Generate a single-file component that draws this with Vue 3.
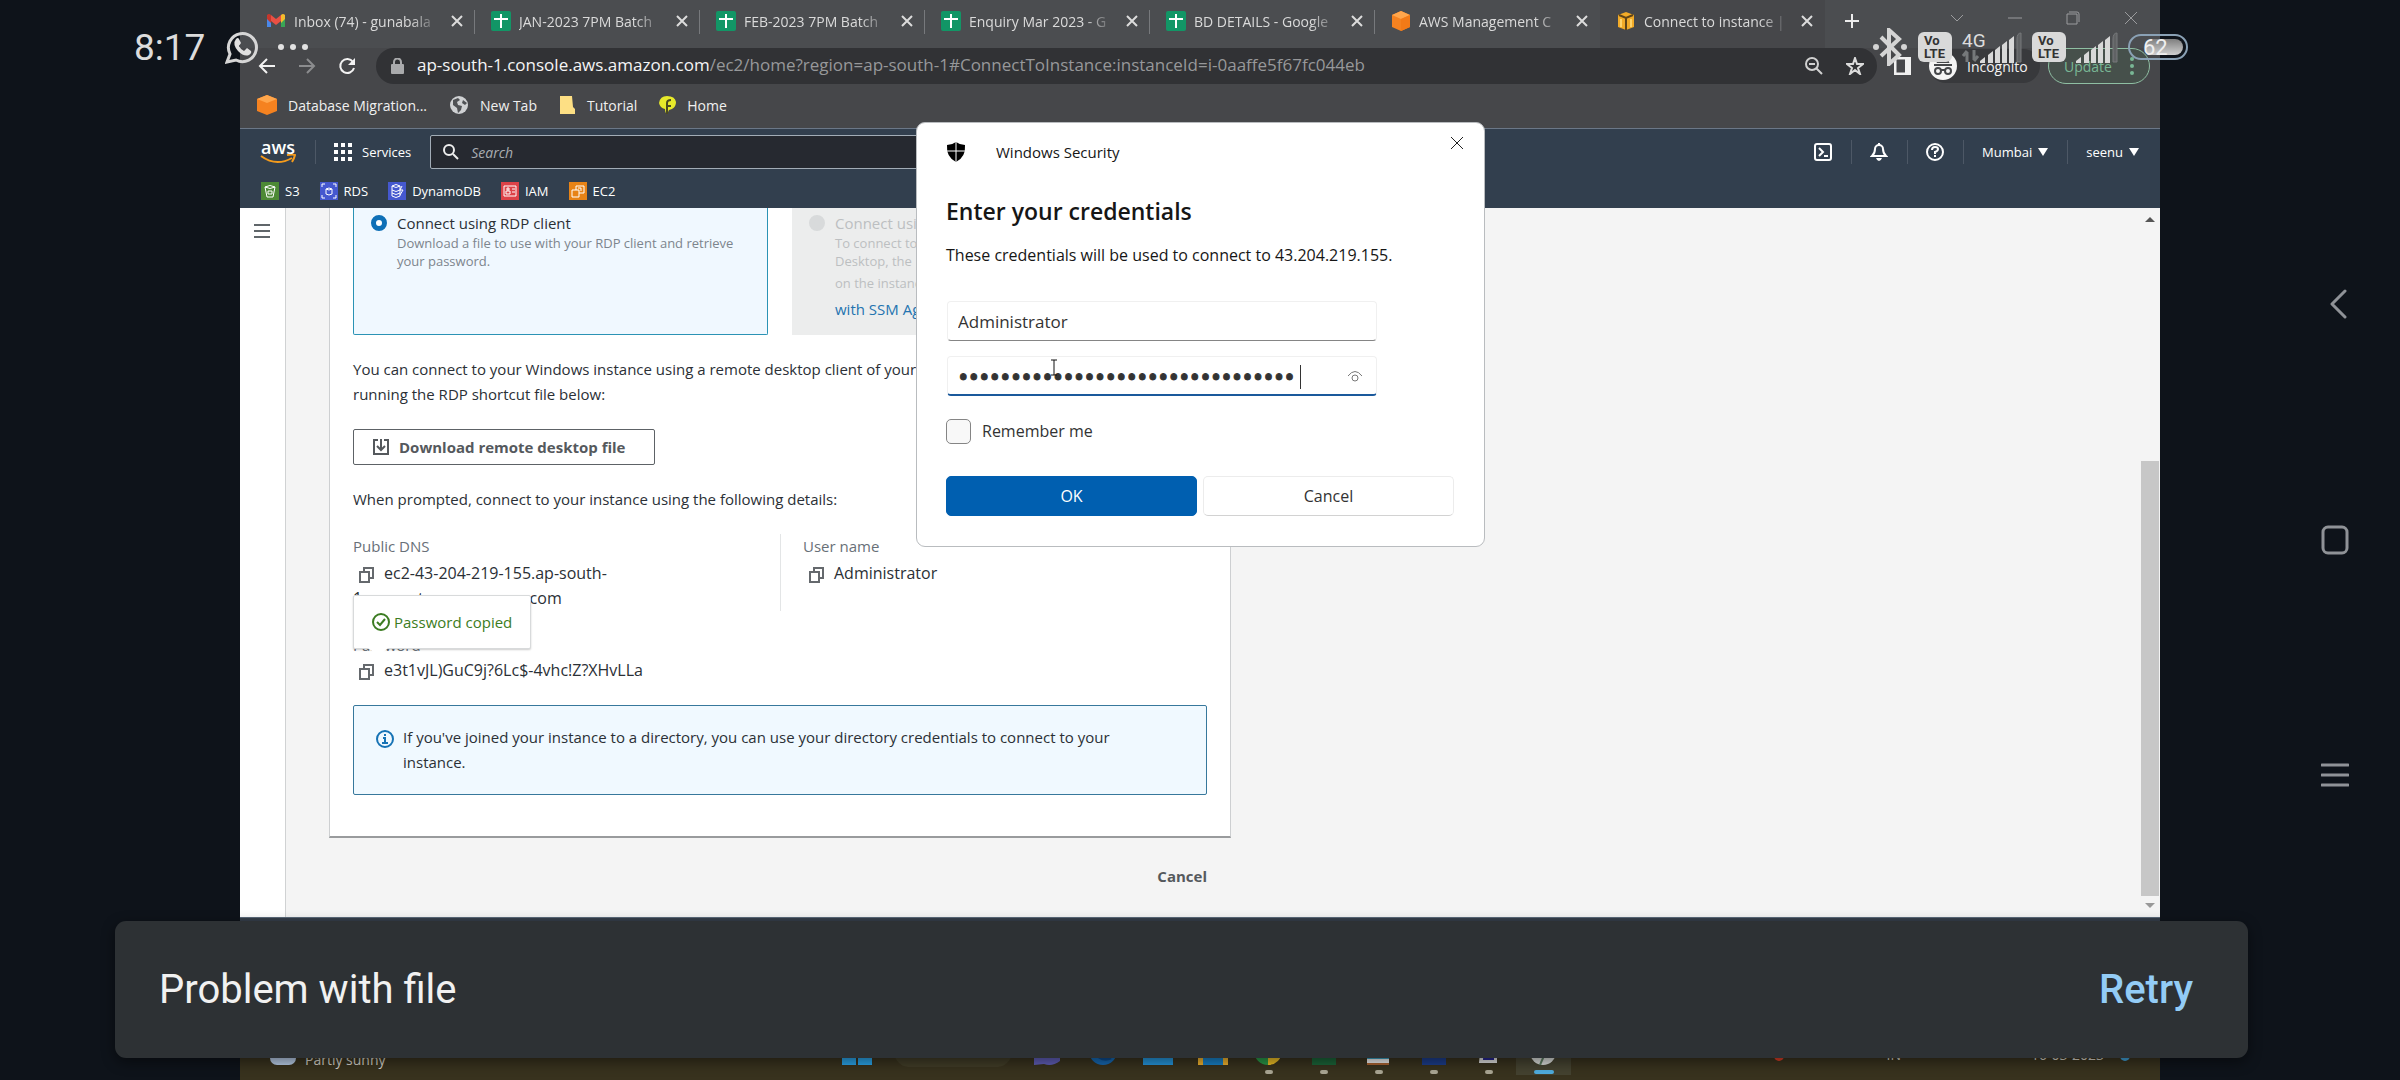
<script setup>
import { ref } from 'vue'

const tabs = [
  { title: 'Inbox (74) - gunabala', icon: 'gmail', line: true },
  { title: 'JAN-2023 7PM Batch', icon: 'sheet', line: true },
  { title: 'FEB-2023 7PM Batch', icon: 'sheet', line: true },
  { title: 'Enquiry Mar 2023 - G', icon: 'sheet', line: true },
  { title: 'BD DETAILS - Google', icon: 'sheet', line: true },
  { title: 'AWS Management C', icon: 'cube' },
  { title: 'Connect to instance |', icon: 'box', active: true },
]

const bookmarks = [
  { label: 'Database Migration...', icon: 'cube' },
  { label: 'New Tab', icon: 'globe' },
  { label: 'Tutorial', icon: 'folder' },
  { label: 'Home', icon: 'leaf' },
]

const favourites = [
  { label: 'S3', color: '#4d8a35' },
  { label: 'RDS', color: '#4558cf' },
  { label: 'DynamoDB', color: '#4558cf' },
  { label: 'IAM', color: '#dd4248' },
  { label: 'EC2', color: '#e78316' },
]

const taskApps = ['start', 'search', 'chat', 'edge', 'mail', 'files', 'chrome', 'excel', 'notes', 'word', 'putty', 'rdp']

const user = ref('Administrator')
const password = ref('e3t1vJL)GuC9j?6Lc$-4vhc!Z?XHvLLa')
const remember = ref(false)
</script>

<template>
  <div class="phone">
    <div class="edge"></div>

    <div class="screen">
      <div class="tabs">
        <div v-for="t in tabs" :key="t.title" class="tab" :class="{ active: t.active, line: t.line }">
          <svg v-if="t.icon === 'gmail'" class="fav" viewBox="0 0 20 20">
            <path d="M1 5v11h4V9z" fill="#4a88e8" /><path d="M19 5v11h-4V9z" fill="#39a556" />
            <path d="M1 4q2-2 4 0v8L1 8z" fill="#c5372c" /><path d="M5 4l5 4 5-4v6l-5 4-5-4z" fill="#ea5044" />
            <path d="M15 4q2-2 4 0v4l-4 4z" fill="#f5bb2c" />
          </svg>
          <svg v-else-if="t.icon === 'sheet'" class="fav" viewBox="0 0 20 20">
            <rect width="20" height="20" rx="2" fill="#129666" />
            <path d="M10 3v14M3 8h14" stroke="#fff" stroke-width="2" />
          </svg>
          <svg v-else-if="t.icon === 'cube'" class="fav" viewBox="0 0 20 20">
            <path d="M10 0l9 4v12l-9 4-9-4V4z" fill="#f58220" /><path d="M10 0l9 4-9 4-9-4z" fill="#ffa64c" />
            <path d="M10 8l9-4v12l-9 4z" fill="#f37a17" />
          </svg>
          <svg v-else class="fav" viewBox="0 0 20 20">
            <path d="M10 1l8 3v12l-8 3-8-3V4z" fill="#f2ab28" /><path d="M3 4l7 3 7-3M10 7v12" stroke="#604417" stroke-width="2" fill="none" />
            <path d="M5 8v8M15 8v8" stroke="#ffd36a" stroke-width="2" />
          </svg>
          <span class="tab-title">{{ t.title }}</span>
          <button class="tab-x" aria-label="Close tab">
            <svg width="12" height="12" viewBox="0 0 12 12"><path d="M1 1l10 10M11 1L1 11" stroke="#dcdcdc" stroke-width="2" /></svg>
          </button>
        </div>
        <button class="new-tab" aria-label="New tab">
          <svg width="16" height="16" viewBox="0 0 16 16"><path d="M8 1v14M1 8h14" stroke="#ececec" stroke-width="2" /></svg>
        </button>
        <div class="win-controls">
          <svg width="14" height="14" viewBox="0 0 14 14"><path d="M1 4l6 6 6-6" /></svg>
          <svg width="14" height="14" viewBox="0 0 14 14"><path d="M0 7h14" /></svg>
          <svg width="14" height="14" viewBox="0 0 14 14"><path d="M1 3h10v10H1zM3 1h8q2 0 2 2v8" /></svg>
          <svg width="14" height="14" viewBox="0 0 14 14"><path d="M1 1l12 12M13 1L1 13" /></svg>
        </div>
      </div>

      <div class="toolbar">
        <button aria-label="Back"><svg width="18" height="18" viewBox="0 0 18 18"><path d="M17 9H2M9 2L2 9l7 7" stroke="#f2f2f2" stroke-width="2" fill="none" /></svg></button>
        <button aria-label="Forward"><svg width="18" height="18" viewBox="0 0 18 18"><path d="M1 9h15M9 2l7 7-7 7" stroke="#8b8c8e" stroke-width="2" fill="none" /></svg></button>
        <button aria-label="Reload"><svg width="18" height="18" viewBox="0 0 18 18"><path d="M15 5a7 7 0 1 0 1 6" stroke="#f2f2f2" stroke-width="2" fill="none" /><path d="M17 1v7h-7z" fill="#f2f2f2" /></svg></button>
        <div class="address">
          <svg width="13" height="16" viewBox="0 0 13 16"><rect y="6" width="13" height="10" rx="1" fill="#a9aaac" /><path d="M3 7V4a3 3 0 0 1 7 0v3" stroke="#a9aaac" stroke-width="2" fill="none" /></svg>
          <span class="url"><b>ap-south-1.console.aws.amazon.com</b>/ec2/home?region=ap-south-1#ConnectToInstance:instanceId=i-0aaffe5f67fc044eb</span>
          <svg width="18" height="18" viewBox="0 0 18 18"><g stroke="#d0d0d0" stroke-width="2" fill="none"><circle cx="7" cy="7" r="6" /><path d="M11 11l6 6M4 7h6" /></g></svg>
          <svg width="18" height="18" viewBox="0 0 18 18"><path d="M9 1l2 6h6l-5 4 2 6-5-4-5 4 2-6-5-4h6z" stroke="#dcdcdc" stroke-width="2" fill="none" /></svg>
        </div>
        <svg class="panel-ico" width="17" height="18" viewBox="0 0 17 18"><path d="M1 1h15v16H1z" stroke="#f0f0f0" stroke-width="3" fill="none" /><path d="M11 1h5v16h-5z" fill="#f0f0f0" /></svg>
        <div class="incognito">
          <svg width="28" height="28" viewBox="0 0 28 28"><circle cx="14" cy="14" r="14" fill="#f4f4f4" /><path d="M5 13h18M9 10l2-5h6l2 5z" stroke="#45474a" stroke-width="2" fill="#45474a" /><g stroke="#45474a" stroke-width="2" fill="none"><circle cx="9" cy="19" r="3" /><circle cx="19" cy="19" r="3" /><path d="M12 18h4" /></g></svg>
          Incognito
        </div>
        <button class="update">Update <svg width="4" height="18" viewBox="0 0 4 18"><g fill="#79b795"><circle cx="2" cy="2" r="2" /><circle cx="2" cy="9" r="2" /><circle cx="2" cy="16" r="2" /></g></svg></button>
      </div>

      <div class="bookmarks">
        <a v-for="b in bookmarks" :key="b.label" href="#">
          <svg v-if="b.icon === 'cube'" width="20" height="20" viewBox="0 0 20 20"><path d="M10 0l10 4v12l-10 4-10-4V4z" fill="#f58220" /><path d="M10 0l10 4-10 4L0 4z" fill="#ffa64c" /></svg>
          <svg v-else-if="b.icon === 'globe'" width="20" height="20" viewBox="0 0 20 20"><circle cx="10" cy="10" r="9" fill="#cfd1d3" /><path d="M4 5l5-2 2 2-3 2 1 3 4 1-1 4-3 3-1-5-4-3zM14 5l4 3-2 2-3-2z" fill="#505255" /></svg>
          <svg v-else-if="b.icon === 'folder'" width="17" height="18" viewBox="0 0 17 18"><path d="M1 0h12l1 11 2 2v5H1z" fill="#fddf84" /></svg>
          <svg v-else width="17" height="18" viewBox="0 0 17 18"><path d="M0 7q1-7 8-7 8 0 9 6 0 5-4 7l-3 1-2 4q-2-1-2-5Q1 12 0 7z" fill="#e7e92a" /><path d="M8 18V7q0-3 4-3M8 10h4" stroke="#4a4a20" stroke-width="2" fill="none" /></svg>
          {{ b.label }}
        </a>
      </div>

      <header class="aws">
        <div class="aws-top">
          <a class="logo" href="#" aria-label="AWS home">
            <span>aws</span>
            <svg width="36" height="11" viewBox="0 0 36 11"><path d="M1 2q15 11 31 2" stroke="#f49b1c" stroke-width="2" fill="none" /><path d="M27 1q6-1 8 0-1 4-3 7" stroke="#f49b1c" stroke-width="2" fill="none" /></svg>
          </a>
          <button class="services">
            <svg width="18" height="18" viewBox="0 0 18 18" fill="#fff"><g v-for="y in [0, 7, 14]" :key="y"><rect v-for="x in [0, 7, 14]" :key="x" :x="x" :y="y" width="4" height="4" /></g></svg>
            Services
          </button>
          <label class="search-box">
            <svg width="16" height="16" viewBox="0 0 16 16"><circle cx="6" cy="6" r="5" stroke="#eee" stroke-width="2" fill="none" /><path d="M10 10l5 5" stroke="#eee" stroke-width="2" /></svg>
            <input type="text" placeholder="Search" aria-label="Search" />
          </label>
          <nav class="aws-tools">
            <button aria-label="CloudShell"><svg width="18" height="18" viewBox="0 0 18 18"><rect x="1" y="1" width="16" height="16" rx="2" stroke="#fff" stroke-width="2" fill="none" /><path d="M5 5l4 4-4 4M10 13h4" stroke="#fff" stroke-width="2" fill="none" /></svg></button>
            <button aria-label="Notifications"><svg width="18" height="18" viewBox="0 0 18 18"><path d="M2 13q3-3 3-7a4 4 0 0 1 8 0q0 4 3 7z" stroke="#fff" stroke-width="2" fill="none" /><path d="M6 15h6q-1 3-3 3t-3-3zM8 0h2v3H8z" fill="#fff" /></svg></button>
            <button aria-label="Help"><svg width="18" height="18" viewBox="0 0 18 18"><circle cx="9" cy="9" r="8" stroke="#fff" stroke-width="2" fill="none" /><path d="M6 7q0-3 3-3t3 2q0 2-3 3v2M9 12v2" stroke="#fff" stroke-width="2" fill="none" /></svg></button>
            <button>Mumbai <i class="caret-down"></i></button>
            <button>seenu <i class="caret-down"></i></button>
          </nav>
        </div>
        <nav class="aws-favs">
          <a v-for="f in favourites" :key="f.label" href="#">
            <svg width="18" height="18" viewBox="0 0 18 18">
              <rect width="18" height="18" :fill="f.color" />
              <g stroke="#fff" fill="none">
                <path v-if="f.label === 'S3'" d="M4 5q5-3 10 0l-2 10H6zM4 5q5 3 10 0M7 9h4v3H7z" />
                <path v-else-if="f.label === 'RDS'" d="M6 7q3-2 6 0v5q-3 2-6 0zM6 7q3 2 6 0M2 5V2h3M13 2h3v3M2 13v3h3M13 16h3v-3" />
                <path v-else-if="f.label === 'DynamoDB'" d="M4 4q4-3 8 0v10q-4 3-8 0zM4 4q4 3 8 0M4 8q4 3 8 0M4 11q4 3 8 0M14 4l-2 4h3l-3 5" />
                <path v-else-if="f.label === 'IAM'" d="M3 4h12v10H3zM5 12h4V9H5zM6 6h2v2H6zM11 7h3M11 10h3" />
                <path v-else d="M3 8h7v7H3zM7 8V4h8v7h-5M9 6h3v3" />
              </g>
            </svg>
            {{ f.label }}
          </a>
        </nav>
      </header>

      <div class="body">
        <aside class="side">
          <button aria-label="Open navigation"><svg width="16" height="14" viewBox="0 0 16 14"><path d="M0 1h16M0 7h16M0 13h16" stroke="#60666a" stroke-width="2" /></svg></button>
        </aside>

        <main class="main">
          <section class="panel">
            <div class="cards">
              <label class="card on">
                <input type="radio" name="method" checked />
                <span class="card-text">
                  <span class="card-title">Connect using RDP client</span>
                  <span class="card-desc">Download a file to use with your RDP client and retrieve<br />your password.</span>
                </span>
              </label>
              <label class="card off">
                <input type="radio" name="method" disabled />
                <span class="card-text">
                  <span class="card-title">Connect using</span>
                  <span class="card-desc">To connect to<br />Desktop, the</span>
                  <span class="card-note">on the instance</span>
                  <a href="#">with SSM Agent</a>
                </span>
              </label>
            </div>

            <p>You can connect to your Windows instance using a remote desktop client of your<br />running the RDP shortcut file below:</p>
            <button class="download">
              <svg width="16" height="16" viewBox="0 0 16 16"><path d="M5 1H1v14h14V1h-4M8 0v11M4 7l4 4 4-4" stroke="#55595d" stroke-width="2" fill="none" /></svg>
              Download remote desktop file
            </button>
            <p>When prompted, connect to your instance using the following details:</p>

            <div class="details">
              <div>
                <div class="label">Public DNS</div>
                <div class="value"><svg class="copy" width="15" height="16" viewBox="0 0 15 16"><path d="M1 5h9v10H1zM5 5V1h9v10h-4" /></svg>ec2-43-204-219-155.ap-south-<br />1.compute.amazonaws.com</div>
              </div>
              <div class="second">
                <div class="label">User name</div>
                <div class="value"><svg class="copy" width="15" height="16" viewBox="0 0 15 16"><path d="M1 5h9v10H1zM5 5V1h9v10h-4" /></svg>Administrator</div>
              </div>
            </div>

            <div class="pass">
              <div class="label">Password</div>
              <div class="value"><svg class="copy" width="15" height="16" viewBox="0 0 15 16"><path d="M1 5h9v10H1zM5 5V1h9v10h-4" /></svg>e3t1vJL)GuC9j?6Lc$-4vhc!Z?XHvLLa</div>
              <div class="tip" role="status">
                <svg width="18" height="18" viewBox="0 0 18 18"><circle cx="9" cy="9" r="8" /><path d="M5 9l3 3 5-6" /></svg>
                Password copied
              </div>
            </div>

            <div class="alert">
              <svg width="18" height="18" viewBox="0 0 18 18"><circle cx="9" cy="9" r="8" stroke="#1673b5" stroke-width="2" fill="none" /><path d="M9 4v2M7 8h2v5M6 13h6" stroke="#1673b5" stroke-width="2" fill="none" /></svg>
              <span>If you've joined your instance to a directory, you can use your directory credentials to connect to your<br />instance.</span>
            </div>
          </section>
          <div class="foot"><button>Cancel</button></div>
        </main>

        <div class="scroll"><i class="up"></i><i class="thumb"></i><i class="down"></i></div>
      </div>

      <div class="aws-footer"></div>
      <div class="taskbar">
        <div class="weather">
          <svg width="26" height="26" viewBox="0 0 26 26"><circle cx="16" cy="9" r="8" fill="#f5b93a" /><rect y="10" width="26" height="16" rx="7" fill="#b7cbe6" /></svg>
          <span>Partly sunny</span>
        </div>
        <div class="apps">
          <div v-for="(a, i) in taskApps" :key="a" class="app" :class="[a, { run: i > 5 }]">
            <svg v-if="a === 'start'" width="30" height="30" viewBox="0 0 30 30"><path d="M0 0h14v14H0zM16 0h14v14H16zM0 16h14v14H0zM16 16h14v14H16z" fill="#2aa2e6" /></svg>
            <svg v-else-if="a === 'chat'" width="28" height="28" viewBox="0 0 28 28"><path d="M0 4h26v20q-8 6-16 3l-10 1z" fill="#5f5db5" /></svg>
            <svg v-else-if="a === 'edge'" width="28" height="28" viewBox="0 0 28 28"><circle cx="14" cy="14" r="14" fill="#1667b0" /><path d="M10 20q6 4 12 1" stroke="#0c4b8c" stroke-width="3" fill="none" /></svg>
            <svg v-else-if="a === 'mail'" width="30" height="28" viewBox="0 0 30 28"><path d="M0 4h30v24H0z" fill="#2493d8" /></svg>
            <svg v-else-if="a === 'files'" width="30" height="28" viewBox="0 0 30 28"><path d="M0 4h30v24H0z" fill="#edb02d" /><path d="M5 18h20v10H5z" fill="#187fc4" /></svg>
            <svg v-else-if="a === 'chrome'" width="28" height="28" viewBox="0 0 28 28"><path d="M14 0v28A14 14 0 0 1 14 0z" fill="#299747" /><path d="M14 0a14 14 0 0 1 0 28z" fill="#eabc25" /></svg>
            <svg v-else-if="a === 'excel'" width="26" height="26" viewBox="0 0 26 26"><path d="M2 2h24v24H2z" fill="#1b6338" /></svg>
            <svg v-else-if="a === 'notes'" width="24" height="28" viewBox="0 0 24 28"><path d="M1 2h22v20H1z" fill="#3a9fc0" /><path d="M1 22h22v4H1z" fill="#eee" /><path d="M1 26h22v2H1z" fill="#a86230" /></svg>
            <svg v-else-if="a === 'word'" width="26" height="26" viewBox="0 0 26 26"><path d="M2 2h24v24H2z" fill="#1c3d8a" /></svg>
            <svg v-else-if="a === 'putty'" width="22" height="28" viewBox="0 0 22 28"><path d="M4 4h16v22H2z" fill="#ddd" /><path d="M7 8h10v15H6z" fill="#25258f" /></svg>
            <svg v-else-if="a === 'rdp'" width="26" height="28" viewBox="0 0 26 28"><circle cx="13" cy="15" r="13" fill="#d9dcd9" /><path d="M10 28l6-14" stroke="#5e7d62" stroke-width="2" /></svg>
          </div>
        </div>
        <div class="tray">
          <span class="red"></span>
          <span>ENG<br />IN</span>
          <span>20:17<br />16-03-2023</span>
          <span class="blue"></span>
        </div>
      </div>

      <div class="dialog" role="dialog" aria-label="Windows Security">
        <div class="dlg-head">
          <svg width="20" height="20" viewBox="0 0 20 20"><path d="M10 0q4 3 9 3 1 12-9 17Q0 15 1 3q5 0 9-3z" fill="#000" /><path d="M10 0v20M1 9h18" stroke="#fff" /></svg>
          <span>Windows Security</span>
          <button aria-label="Close"><svg width="14" height="14" viewBox="0 0 14 14"><path d="M1 1l12 12M13 1L1 13" stroke="#222" /></svg></button>
        </div>
        <h1>Enter your credentials</h1>
        <p>These credentials will be used to connect to 43.204.219.155.</p>
        <input v-model="user" class="field" type="text" aria-label="User name" />
        <div class="pw">
          <input v-model="password" class="field" type="password" aria-label="Password" />
          <i class="text-caret"></i>
          <svg class="eye" width="16" height="12" viewBox="0 0 16 12"><path d="M1 6q7-9 14 0" stroke="#777" fill="none" /><circle cx="8" cy="8" r="3" stroke="#777" fill="none" /></svg>
          <svg class="ibeam" width="8" height="17" viewBox="0 0 8 17"><path d="M1 1h6M1 16h6M4 1v15" stroke="#111" fill="none" /></svg>
        </div>
        <label class="remember"><input v-model="remember" type="checkbox" />Remember me</label>
        <div class="dlg-actions"><button class="ok">OK</button><button>Cancel</button></div>
      </div>
    </div>

    <nav class="keys">
      <button aria-label="Back"><svg width="28" height="30" viewBox="0 0 28 30"><path d="M24 2L11 15l13 13" /></svg></button>
      <button aria-label="Home"><svg width="28" height="30" viewBox="0 0 28 30"><rect x="2" y="2" width="24" height="26" rx="5" /></svg></button>
      <button aria-label="Recent apps"><svg width="28" height="30" viewBox="0 0 28 30"><path d="M1 4h26M1 14h26M1 24h26" /></svg></button>
    </nav>

    <div class="status">
      <span class="clock">8:17</span>
      <svg width="34" height="34" viewBox="0 0 34 34"><path d="M2 32l3-8a14 14 0 1 1 6 6z" stroke="#d6d6d6" stroke-width="3" fill="none" /><path d="M11 9q2-2 3 0l2 4-2 3q2 4 5 5l3-3 4 3q1 2-2 4-5 2-11-4-6-7-2-12z" fill="#e0e0e0" /></svg>
      <svg width="32" height="8" viewBox="0 0 32 8" class="dots"><g fill="#e2e2e2"><circle cx="4" cy="4" r="3" /><circle cx="16" cy="4" r="3" /><circle cx="28" cy="4" r="3" /></g></svg>
      <div class="radios">
        <svg width="36" height="38" viewBox="0 0 36 38"><path d="M9 9l18 18-10 9V2l10 9L9 28" stroke="#d4d4d4" stroke-width="4" fill="none" /><circle cx="4" cy="19" r="3" fill="#d4d4d4" /><circle cx="32" cy="19" r="3" fill="#d4d4d4" /></svg>
        <span class="volte">Vo<br />LTE</span>
        <span class="cell">
          <span>4G</span>
          <svg width="18" height="12" viewBox="0 0 18 12"><path d="M5 12V2M1 6l4-5M12 0v10M16 6l-4 5" stroke="#75787a" stroke-width="3" fill="none" /></svg>
        </span>
        <svg class="bars" width="42" height="31" viewBox="0 0 42 31"><path d="M0 31h5v-6l-5 4zM8 31h5V19l-5 4zM15 31h5V14l-5 4zM22 31h5V9l-5 4zM29 31h5V4l-5 4z" fill="#d8d8d8" /><path d="M37 30h4V1q-4 0-4 6z" stroke="#77797b" fill="#606264" /></svg>
        <span class="volte">Vo<br />LTE</span>
        <svg width="42" height="31" viewBox="0 0 42 31"><path d="M0 31h5v-6l-5 4zM8 31h5V19l-5 4zM15 31h5V14l-5 4zM22 31h5V9l-5 4zM29 31h5V4l-5 4z" fill="#d8d8d8" /><path d="M37 30h4V1q-4 0-4 6z" stroke="#77797b" fill="#606264" /></svg>
        <span class="battery"><i></i><span>62</span></span>
      </div>
    </div>

    <div class="snack" role="alert">
      <span>Problem with file</span>
      <button>Retry</button>
    </div>
  </div>
</template>

<style>
body { margin: 0; background: #0e131a; }
</style>

<style scoped>
* { box-sizing: border-box; }
button { font: inherit; color: inherit; background: none; border: 0; padding: 0; margin: 0; }
a { color: inherit; text-decoration: none; }
svg { flex: none; display: block; }
p, h1 { margin: 0; }

.phone { position: relative; display: flex; min-height: 100vh; background: #0e131a; font-family: "Open Sans", "Noto Sans", sans-serif; font-size: 15px; overflow: hidden; }
.edge, .keys { width: 10%; }
.screen { position: relative; width: 80%; display: flex; flex-direction: column; background: #46474a; }

.tabs { display: flex; align-items: stretch; height: 48px; padding-left: 10px; background: #4b4d50; color: #dadada; font-size: 14px; }
.tab { flex: 0 1 225px; min-width: 0; display: flex; align-items: center; gap: 8px; padding: 0 12px 6px 16px; position: relative; }
.tab.active { background: #46474a; }
.tab.line::after { content: ""; position: absolute; right: 0; top: 10px; height: 24px; width: 1px; background: #77797c; }
.fav { width: 20px; height: 20px; }
.tab-title { flex: 1; overflow: hidden; white-space: nowrap; -webkit-mask-image: linear-gradient(90deg, #000 78%, transparent 98%); mask-image: linear-gradient(90deg, #000 78%, transparent 98%); }
.new-tab { padding: 0 19px 6px; }
.win-controls { flex: 1; display: flex; justify-content: flex-end; align-items: center; gap: 44px; padding: 0 22px 12px 0; }
.win-controls svg { stroke: #9b9c9e; fill: none; }

.toolbar { display: flex; align-items: center; height: 36px; padding: 0 10px 0 18px; color: #f2f2f2; gap: 22px; }
.address { flex: 1; min-width: 0; height: 36px; border-radius: 18px; background: #313235; display: flex; align-items: center; gap: 13px; padding: 0 13px 0 15px; margin: 0 -5px 0 -2px; }
.url { flex: 1; overflow: hidden; white-space: nowrap; font-size: 17px; line-height: 24px; padding-bottom: 2px; color: #97989a; }
.url b { font-weight: 400; color: #f5f5f5; }
.address svg + svg { margin-left: 10px; }
.incognito { display: flex; align-items: center; gap: 10px; width: 111px; height: 34px; border-radius: 17px; background: #38393c; font-size: 14px; margin: 0 -14px 0 -4px; }
.update { display: flex; align-items: center; justify-content: space-between; width: 102px; height: 36px; padding: 0 15px; border: 1px solid #8fbfa3; border-radius: 18px; color: #79b795; background: #46504b; font-size: 14px; }

.bookmarks { display: flex; align-items: center; gap: 22px; height: 44px; padding: 0 0 2px 17px; color: #f0f0f0; }
.bookmarks a { display: flex; align-items: center; gap: 11px; font-size: 14px; }

.aws { height: 80px; background: #323f4e; border-top: 1px solid #6b7787; color: #fff; font-size: 13px; }
.aws-top { display: flex; align-items: center; height: 46px; }
.logo { width: 36px; margin: 0 19px 0 20px; }
.logo span { display: block; text-align: center; font-size: 18px; font-weight: 600; line-height: 14px; }
.services { display: flex; align-items: center; gap: 10px; height: 24px; padding: 0 19px 0 18px; border-left: 1px solid #4d5866; font-weight: 500; }
.search-box { flex: 0 1 900px; display: flex; align-items: center; gap: 12px; height: 34px; padding: 0 12px; background: #262930; border: 1px solid #a2acb6; border-radius: 2px; }
.search-box input { flex: 1; min-width: 0; background: none; border: 0; outline: 0; padding: 0; color: #fff; font: italic 14px "Open Sans", sans-serif; }
.search-box input::placeholder { color: #a9adb2; }
.aws-tools { flex: 1; display: flex; justify-content: flex-end; padding-right: 2px; font-weight: 500; }
.aws-tools button { display: flex; align-items: center; gap: 6px; height: 24px; padding: 0 19px 0 18px; border-right: 1px solid #4d5866; }
.aws-tools button:last-child { border-right: 0; }
.caret-down { border: 5px solid transparent; border-top: 8px solid #fff; border-bottom: 0; }
.aws-favs { display: flex; align-items: center; gap: 20px; height: 32px; padding-left: 21px; }
.aws-favs a { display: flex; align-items: center; gap: 6px; font-weight: 500; }

.body { flex: 1; display: flex; background: #f4f4f4; color: #2b3036; font-size: 15px; line-height: 25px; }
.side { width: 46px; background: #fff; border-right: 1px solid #d0d2d3; padding: 12px 0 0 14px; }
.side svg { width: 16px; }
.main { flex: 1; padding: 0 43px; min-width: 0; }
.panel { width: 902px; padding: 0 23px 41px; background: #fff; border: 1px solid #cdcfd1; border-top: 0; border-bottom: 2px solid #999b9d; }
.cards { display: grid; grid-template-columns: 1fr 1fr; gap: 24px; height: 127px; }
.card { display: flex; gap: 10px; padding: 4px 17px; line-height: 18px; overflow: hidden; }
.card.on { background: #f0f8ff; border: 1px solid #2b93b5; border-top: 0; border-radius: 0 0 2px 2px; }
.card.off { background: #eceded; color: #bcbfc1; }
.card input { appearance: none; flex: none; width: 16px; height: 16px; margin: 3px 0; border-radius: 50%; border: 5px solid #0f70b7; background: #fff; }
.card.off input { border-color: #d8dadb; background: #d8dadb; }
.card-text { display: flex; flex-direction: column; white-space: nowrap; }
.card-title { line-height: 22px; }
.card-desc, .card-note { font-size: 13px; color: #7d858d; }
.card-note { line-height: 26px; }
.card.off .card-desc, .card.off .card-note { color: #bcbfc1; }
.card a { color: #2474b0; line-height: 26px; }
.panel p { margin: 22px 0; white-space: nowrap; }
.download { display: flex; align-items: center; gap: 10px; width: 302px; height: 36px; padding: 0 19px; border: 1px solid #5d6266; border-radius: 2px; color: #55595d; font-weight: 700; white-space: nowrap; }
.details { display: grid; grid-template-columns: 1fr 1fr; }
.details .second { border-left: 1px solid #e3e5e6; padding-left: 22px; }
.label { color: #687078; }
.details .label { margin-bottom: 2px; }
.value { font-size: 16px; }
.copy { display: inline-block; vertical-align: -4px; margin: 0 10px 0 6px; stroke: #65696d; stroke-width: 2; fill: none; }
.pass { position: relative; margin-top: 22px; }
.tip { position: absolute; left: 0; top: -38px; display: flex; align-items: center; gap: 4px; height: 54px; padding: 0 18px; background: #fff; border: 1px solid #d8dadb; border-radius: 2px; box-shadow: 0 1px 2px #0003; color: #3c7c22; white-space: nowrap; }
.tip svg { stroke: #3c7c22; stroke-width: 2; fill: none; }
.tip::after { content: ""; position: absolute; left: 14px; bottom: -8px; border: 10px solid transparent; border-top: 8px solid #fff; border-bottom: 0; }
.alert { display: flex; gap: 9px; margin-top: 22px; padding: 19px 22px; background: #f0f9ff; border: 1px solid #37789c; border-radius: 2px; white-space: nowrap; }
.alert svg { margin-top: 5px; }
.foot { width: 902px; display: flex; justify-content: flex-end; padding: 26px 24px; color: #55595d; font-weight: 700; }
.scroll { width: 20px; padding: 9px 2px; display: flex; flex-direction: column; align-items: center; }
.up { border: 5px solid transparent; border-bottom: 5px solid #555; border-top: 0; }
.down { border: 5px solid transparent; border-top: 5px solid #999; border-bottom: 0; margin-top: 7px; }
.thumb { flex: none; width: 18px; height: 63%; margin-top: auto; background: #c7c7c7; }

.aws-footer { height: 91px; background: #353e4a; border-top: 1px solid #5b6a7a; }
.taskbar { display: flex; align-items: center; height: 72px; background: #38321e; color: #d3d0c8; font-size: 14px; }
.weather { flex: 1; display: flex; align-items: center; gap: 9px; padding-left: 30px; }
.weather svg { margin-top: 16px; }
.weather span { padding-top: 30px; }
.apps { display: flex; height: 72px; }
.app { position: relative; width: 55px; height: 67px; display: flex; align-items: flex-end; justify-content: center; padding-bottom: 10px; }
.app.search { width: 136px; height: 46px; align-self: center; border-radius: 23px; background: #403c27; border: 0 solid transparent; border-width: 0 7px; background-clip: padding-box; }
.app.run::after { content: ""; position: absolute; bottom: 1px; left: 24px; width: 8px; height: 4px; border-radius: 2px; background: #aaa694; }
.app.rdp { background: #444230; }
.app.rdp::after { left: 18px; width: 20px; background: #4fadde; }
.tray { flex: 1; display: flex; align-items: center; justify-content: flex-end; gap: 16px; padding: 2px 30px 0 0; line-height: 20px; }
.tray span { text-align: right; }
.tray span:nth-child(2) { margin-right: 114px; }
.red, .blue { width: 10px; height: 10px; border-radius: 50%; background: #d83d26; margin-top: 22px; }
.red { margin-right: 72px; }
.blue { background: #3f9fd6; }

.dialog { position: absolute; left: 676px; top: 122px; width: 569px; height: 425px; padding: 12px 29px; background: #fff; border: 1px solid #b9bcbf; border-radius: 9px; color: #161616; font-size: 16px; }
.dlg-head { display: flex; align-items: center; height: 34px; gap: 30px; font-size: 15px; }
.dlg-head button { margin: -18px -9px 0 auto; }
.dialog h1 { margin-top: 24px; font-size: 23px; line-height: 36px; font-weight: 600; }
.dialog p { line-height: 24px; margin-top: 14px; }
.field { display: block; width: 430px; height: 40px; padding: 0 10px; border: 1px solid #f0f0f0; border-bottom: 1px solid #858585; border-radius: 4px; background: #fff; font: 17px "Open Sans", sans-serif; color: #333; outline: 0; margin: 34px 0 0 1px; }
.pw { position: relative; width: 430px; }
.pw .field { margin-top: 15px; border-bottom: 2px solid #1a599c; font-size: 28px; -webkit-text-stroke: 1px #333; }
.text-caret { position: absolute; left: 354px; top: 9px; width: 1px; height: 24px; background: #333; }
.eye { position: absolute; right: 13px; top: 14px; }
.ibeam { position: absolute; left: 104px; top: 3px; }
.remember { display: flex; align-items: center; gap: 11px; height: 26px; margin-top: 22px; color: #333; }
.remember input { appearance: none; width: 25px; height: 25px; margin: 0; border: 1px solid #858585; border-radius: 5px; background: #f8f8f8; }
.dlg-actions { display: flex; gap: 6px; margin-top: 32px; }
.dlg-actions button { width: 251px; height: 40px; border: 1px solid #ececec; border-bottom-color: #d2d2d2; border-radius: 5px; color: #333; }
.dlg-actions .ok { background: #005fb0; border-color: #005fb0; color: #fff; }

.keys { display: flex; flex-direction: column; align-items: center; justify-content: center; gap: 206px; padding-left: 110px; }
.keys svg { stroke: #8f9297; stroke-width: 3; fill: none; stroke-linecap: round; stroke-linejoin: round; }

.status { position: absolute; left: 134px; right: 212px; top: 26px; height: 42px; display: flex; align-items: center; color: #dcdcdc; font-family: Roboto, sans-serif; }
.clock { font-size: 37px; margin-right: 20px; }
.dots { margin-left: 18px; }
.radios { margin-left: auto; display: flex; align-items: center; gap: 10px; }
.volte { width: 34px; height: 30px; padding: 2px 0 0 6px; border-radius: 6px; background: #d9d9d9; color: #333; font-size: 13px; line-height: 13px; font-weight: 700; }
.cell { width: 18px; font-size: 19px; line-height: 18px; white-space: nowrap; }
.bars { margin-left: -10px; }
.battery { position: relative; display: flex; align-items: center; justify-content: flex-end; width: 60px; height: 26px; padding: 3px; border: 2px solid #8aa1b5; border-radius: 13px; font-size: 22px; }
.battery i { width: 38px; height: 16px; border-radius: 8px; background: linear-gradient(#7f7f7f, #d0d0d0); }
.battery span { position: absolute; left: 13px; top: 0; line-height: 23px; color: #efefef; }

.snack { position: absolute; left: 115px; right: 152px; bottom: 22px; height: 137px; display: flex; align-items: center; justify-content: space-between; padding: 0 55px 0 44px; border-radius: 11px; background: #2d3134; box-shadow: 0 4px 14px #0007; color: #f1f1f1; font-family: Roboto, sans-serif; font-size: 40px; }
.snack button { color: #93ccf6; font-weight: 500; }
</style>
